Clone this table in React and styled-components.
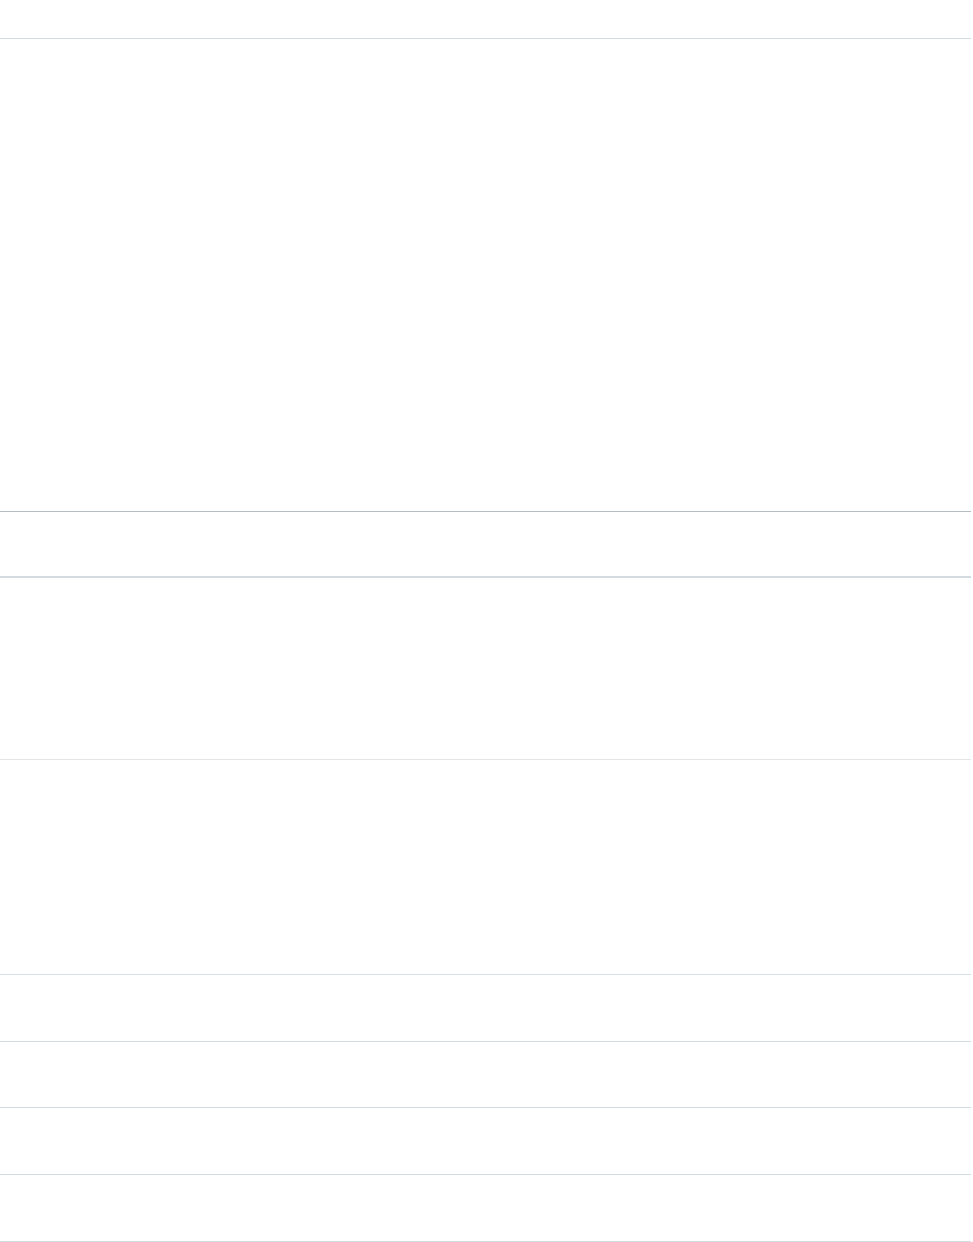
import React from 'react';
import styled, { createGlobalStyle } from 'styled-components';

const GlobalStyle = createGlobalStyle`
  html, body {
    margin: 0;
    padding: 0;
    background: #ffffff;
    font-family: "Liberation Sans", Arial, sans-serif;
  }
`;

const Page = styled.div`
  width: 971px;
  display: flex;
  flex-direction: column;
`;

const Section = styled.div`
  height: ${(p) => p.h}px;
  border-bottom: ${(p) => p.bw || 1}px solid ${(p) => p.line || '#d8dde6'};
`;

const sections = [
  { h: 38, line: '#d4dbe1' },
  { h: 472, line: '#b4bcc4' },
  { h: 64, line: '#d4dbe1', bw: 2 },
  { h: 181, line: '#e3e7e9' },
  { h: 214, line: '#d8dee2' },
  { h: 66, line: '#d4dbe1' },
  { h: 65, line: '#d4dbe1' },
  { h: 66, line: '#d4dbe1' },
  { h: 66, line: '#d4dbe1' },
];

export default function App() {
  return (
    <>
      <GlobalStyle />
      <Page>
        {sections.map((s, i) => (
          <Section key={i} h={s.h} line={s.line} bw={s.bw} />
        ))}
      </Page>
    </>
  );
}
